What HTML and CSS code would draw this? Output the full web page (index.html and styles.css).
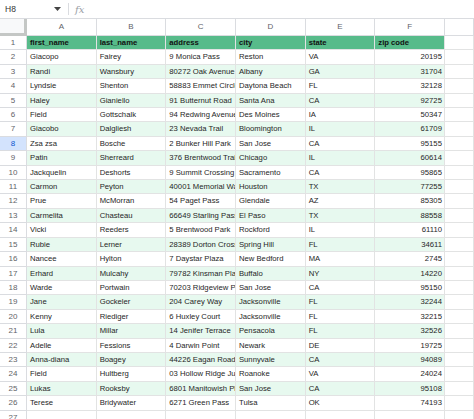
FILE: index.html
```html
<!DOCTYPE html>
<html>
<head>
<meta charset="utf-8">
<link rel="stylesheet" href="styles.css">
</head>
<body>
<div class="fbar">
  <div class="namebox">H8</div>
  <svg class="caret" width="7" height="4" viewBox="0 0 7 4"><path d="M0 0H7L3.5 4Z" fill="#444"/></svg>
  <div class="divider"></div>
  <div class="fx">fx</div>
</div>
<div class="sheet" id="sheet">
  <div class="row colhead">
    <div class="corner"></div>
    <div class="ch">A</div><div class="ch">B</div><div class="ch">C</div><div class="ch">D</div><div class="ch">E</div><div class="ch">F</div><div class="ch last"></div>
  </div>
</div>
<script src="app.js"></script>
</body>
</html>
```
FILE: styles.css
```css
* { box-sizing: border-box; }
html, body { margin: 0; padding: 0; background: #fff; }
body {
  width: 474px; height: 419px; overflow: hidden;
  font-family: "Liberation Sans", Arial, sans-serif;
  font-size: 7.7px; color: #262626;
}
.fbar {
  height: 19px; display: flex; align-items: center;
  border-bottom: 1px solid #dadce0;
}
.namebox { width: 50px; padding-left: 5px; color: #333; font-size: 8.5px; }
.caret { margin-left: 4px; }
.divider { width: 1px; height: 12px; background: #dadce0; margin-left: 7px; }
.fx { margin-left: 6px; font-family: "DejaVu Serif", serif; font-style: italic; color: #9aa0a6; font-size: 10px; }
.sheet { display: flex; flex-direction: column; }
.row {
  display: grid;
  grid-template-columns: 27px repeat(6, 69.67px) 1fr;
  height: 14.42px; flex: none;
}
.row > div {
  border-right: 1px solid #e2e3e3;
  border-bottom: 1px solid #e2e3e3;
  white-space: nowrap; overflow: hidden;
  padding: 0 0 0 3px; line-height: 13.6px;
}
.colhead { height: 17px; }
.colhead > div { line-height: 16px; text-align: center; color: #5f6368; background: #fff; border-color: #dadce0; font-size: 8px; padding: 0; }
.colhead > .corner { background: #f8f9fa; border-right: 3px solid #c4c7c5; border-bottom: 3px solid #c4c7c5; }
.row > .rh { text-align: center; color: #5f6368; background: #fff; padding: 0; border-color: #dadce0; font-size: 8px; }
.row > .rh.sel { background: #d3e3fd; color: #0b57d0; }
.row.hdr > .c { background: #57bb8a; font-weight: bold; color: #111; }
.row.band > .c { background: #e7f9ef; }
.row > .num { text-align: right; padding: 0 2px 0 0; }
```
FILE: app.js
```js
const data = [
["first_name","last_name","address","city","state","zip code"],
["Giacopo","Fairey","9 Monica Pass","Reston","VA","20195"],
["Randi","Wansbury","80272 Oak Avenue","Albany","GA","31704"],
["Lyndsie","Shenton","58883 Emmet Circle","Daytona Beach","FL","32128"],
["Haley","Gianiello","91 Butternut Road","Santa Ana","CA","92725"],
["Field","Gottschalk","94 Redwing Avenue","Des Moines","IA","50347"],
["Giacobo","Dalgliesh","23 Nevada Trail","Bloomington","IL","61709"],
["Zsa zsa","Bosche","2 Bunker Hill Park","San Jose","CA","95155"],
["Patin","Sherreard","376 Brentwood Trail","Chicago","IL","60614"],
["Jackquelin","Deshorts","9 Summit Crossing","Sacramento","CA","95865"],
["Carmon","Peyton","40001 Memorial Way","Houston","TX","77255"],
["Prue","McMorran","54 Paget Pass","Glendale","AZ","85305"],
["Carmelita","Chasteau","66649 Starling Pass","El Paso","TX","88558"],
["Vicki","Reeders","5 Brentwood Park","Rockford","IL","61110"],
["Rubie","Lerner","28389 Dorton Crossing","Spring Hill","FL","34611"],
["Nancee","Hylton","7 Daystar Plaza","New Bedford","MA","2745"],
["Erhard","Mulcahy","79782 Kinsman Place","Buffalo","NY","14220"],
["Warde","Portwain","70203 Ridgeview Pass","San Jose","CA","95150"],
["Jane","Gockeler","204 Carey Way","Jacksonville","FL","32244"],
["Kenny","Riediger","6 Huxley Court","Jacksonville","FL","32215"],
["Lula","Millar","14 Jenifer Terrace","Pensacola","FL","32526"],
["Adelle","Fessions","4 Darwin Point","Newark","DE","19725"],
["Anna-diana","Boagey","44226 Eagan Road","Sunnyvale","CA","94089"],
["Field","Hultberg","03 Hollow Ridge Junction","Roanoke","VA","24024"],
["Lukas","Rooksby","6801 Manitowish Plaza","San Jose","CA","95108"],
["Terese","Bridywater","6271 Green Pass","Tulsa","OK","74193"],
["","","","","",""]
];
const sheet = document.getElementById("sheet");
data.forEach((r, i) => {
  const n = i + 1;
  const row = document.createElement("div");
  row.className = "row" + (n === 1 ? " hdr" : (n < 27 && n % 2 === 1 ? " band" : ""));
  const rh = document.createElement("div");
  rh.className = "rh" + (n === 8 ? " sel" : "");
  rh.textContent = n;
  row.appendChild(rh);
  r.forEach((v, j) => {
    const c = document.createElement("div");
    c.className = (n < 27 ? "c" : "") + (j === 5 && n > 1 ? " num" : "");
    c.textContent = v;
    row.appendChild(c);
  });
  row.appendChild(document.createElement("div"));
  sheet.appendChild(row);
});
```
